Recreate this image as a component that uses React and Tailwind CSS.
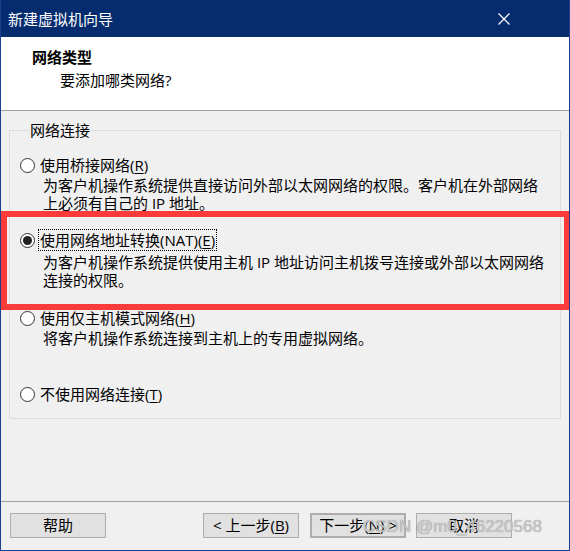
const Radio = ({ checked }) => (
  <span className="w-[15px] h-[15px] rounded-full border border-[#333] bg-white flex items-center justify-center shrink-0">
    {checked && <span className="w-[9px] h-[9px] rounded-full bg-[#222]" />}
  </span>
);

const Key = ({ k }) => (
  <>
    (<span className="underline underline-offset-2">{k}</span>)
  </>
);

const Button = ({ children, className = "" }) => (
  <button
    className={
      "h-[25px] w-[96px] bg-[#e1e1e1] border border-[#adadad] text-[15px] leading-none text-black flex items-center justify-center " +
      className
    }
  >
    {children}
  </button>
);

export default function App() {
  return (
    <div className="relative w-[570px] h-[551px] flex flex-col bg-[#f0f0f0] font-['Open_Sans','Noto_Sans_CJK_SC',sans-serif] text-[15px] text-black border-x border-b border-[#1d3f8c] overflow-hidden">
      {/* title bar */}
      <div className="h-[37px] shrink-0 bg-[#062c70] flex items-center justify-between pl-[8px] pr-[60px] -mx-px">
        <span className="text-white text-[15px] leading-[20px]">新建虚拟机向导</span>
        <svg width="12" height="12" viewBox="0 0 12 12" className="mt-[1px]">
          <path d="M0.5 0.5 L11.5 11.5 M11.5 0.5 L0.5 11.5" stroke="white" strokeWidth="1.2" />
        </svg>
      </div>

      {/* header */}
      <div className="h-[74px] shrink-0 bg-white border-b border-[#a0a0a0] pl-[31px] pt-[10px]">
        <div className="font-bold leading-[20px]">网络类型</div>
        <div className="pl-[28px] mt-[3px] leading-[20px]">要添加哪类网络?</div>
      </div>

      {/* body */}
      <div className="flex-1 pt-[10px]">
        <fieldset className="mx-[8px] h-[298px] border border-[#dcdcdc] px-[10px]">
          <legend className="ml-[9px] px-[1px] leading-[18px]">网络连接</legend>

          <div className="mt-[16px]">
            <div className="h-[20px] flex items-center gap-[5px]">
              <Radio />
              <span className="leading-[20px]">
                使用桥接网络<Key k="R" />
              </span>
            </div>
            <div className="pl-[23px] mt-[1px] leading-[18px]">
              <div>为客户机操作系统提供直接访问外部以太网网络的权限。客户机在外部网络</div>
              <div>上必须有自己的 IP 地址。</div>
            </div>
          </div>

          <div className="mt-[18px]">
            <div className="h-[20px] flex items-center gap-[3px]">
              <Radio checked />
              <span className="leading-[20px] border border-dotted border-black px-[1px] h-[22px] flex items-center">
                使用网络地址转换(NAT)<Key k="E" />
              </span>
            </div>
            <div className="pl-[23px] mt-[3px] leading-[18px]">
              <div>为客户机操作系统提供使用主机 IP 地址访问主机拨号连接或外部以太网网络</div>
              <div>连接的权限。</div>
            </div>
          </div>

          <div className="mt-[19px]">
            <div className="h-[20px] flex items-center gap-[5px]">
              <Radio />
              <span className="leading-[20px]">
                使用仅主机模式网络<Key k="H" />
              </span>
            </div>
            <div className="pl-[23px] mt-[1px] leading-[18px]">
              <div>将客户机操作系统连接到主机上的专用虚拟网络。</div>
            </div>
          </div>

          <div className="mt-[37px]">
            <div className="h-[20px] flex items-center gap-[5px]">
              <Radio />
              <span className="leading-[20px]">
                不使用网络连接<Key k="T" />
              </span>
            </div>
          </div>
        </fieldset>
      </div>

      {/* footer */}
      <div className="h-[49px] shrink-0 border-t border-[#a0a0a0] flex items-start pt-[11px] pl-[9px]">
        <Button>帮助</Button>
        <div className="flex-1" />
        <div className="flex gap-[10px] pr-[57px]">
          <Button className="mr-[1px]">
            &lt; 上一步<Key k="B" />
          </Button>
          <Button className="border-2 border-[#0078d7]">
            下一步<Key k="N" /> &gt;
          </Button>
          <Button>取消</Button>
        </div>
      </div>

      {/* annotation overlay */}
      <div className="absolute left-0 top-[211px] w-[569px] h-[99px] border-[6px] border-[#fb3a3a] pointer-events-none" />

      {/* watermark */}
      <div className="absolute left-[362px] top-[516px] text-[17px] leading-[22px] font-['Liberation_Sans',sans-serif] text-[#c8c8c8] [text-shadow:0_0_1px_#888] pointer-events-none">
        CSDN @m0_46220568
      </div>
    </div>
  );
}
